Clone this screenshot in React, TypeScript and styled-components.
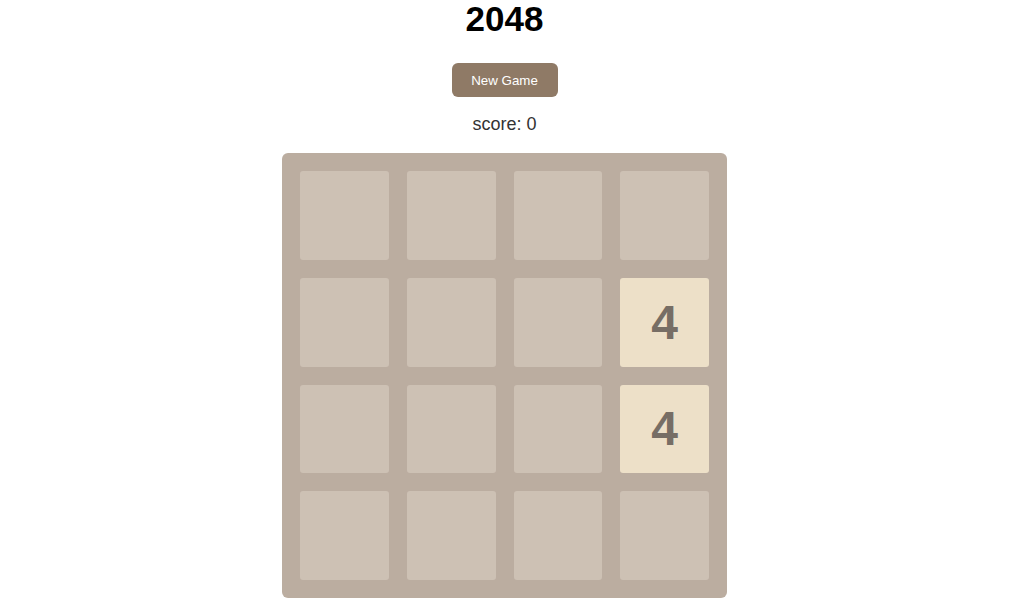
import React, { FC } from 'react';
import styled, { createGlobalStyle } from 'styled-components';

const GlobalStyle = createGlobalStyle`
  html, body {
    margin: 0;
    padding: 0;
    background: #ffffff;
    font-family: "Liberation Sans", Arial, sans-serif;
  }
`;

const board: number[][] = [
    [0, 0, 0, 0],
    [0, 0, 0, 4],
    [0, 0, 0, 4],
    [0, 0, 0, 0],
];

const tileColors: Record<number, string> = {
    0: '#cdc1b4',
    2: '#eee4da',
    4: '#ede0c8',
};

const App: FC = () => {
    return (
        <Page>
            <GlobalStyle />
            <Title>2048</Title>
            <NewGameButton>New Game</NewGameButton>
            <Score>score: 0</Score>
            <Board>
                {board.map((row, r) =>
                    row.map((value, c) => (
                        <Tile key={`${r}-${c}`} $bg={tileColors[value] || '#edc22e'}>
                            {value > 0 ? value : ''}
                        </Tile>
                    ))
                )}
            </Board>
        </Page>
    );
};

// the reference leaves room for a 15px scrollbar on the right
const Page = styled.div`
  display: flex;
  flex-direction: column;
  align-items: center;
  padding-right: 15px;
`;

const Title = styled.h1`
  margin: 0;
  font-size: 35px;
  line-height: 37px;
  font-weight: bold;
  color: #000;
`;

const NewGameButton = styled.button`
  margin-top: 26px;
  width: 106px;
  height: 34px;
  padding: 0;
  border: none;
  border-radius: 6px;
  background: #8f7a66;
  color: #ffffff;
  font-family: "Liberation Sans", Arial, sans-serif;
  font-size: 13.33px;
  cursor: pointer;
`;

const Score = styled.div`
  margin-top: 17px;
  font-size: 18px;
  line-height: 21px;
  color: #333333;
`;

const Board = styled.div`
  margin-top: 18px;
  box-sizing: border-box;
  width: 445px;
  height: 445px;
  padding: 18px;
  display: grid;
  grid-template-columns: repeat(4, 1fr);
  grid-template-rows: repeat(4, 1fr);
  gap: 18px;
  background: #bbada0;
  border-radius: 6px;
`;

const Tile = styled.div<{ $bg: string }>`
  display: flex;
  align-items: center;
  justify-content: center;
  background: ${(p) => p.$bg};
  border-radius: 3px;
  color: #776e65;
  font-size: 48px;
  font-weight: bold;
`;

export default App;
